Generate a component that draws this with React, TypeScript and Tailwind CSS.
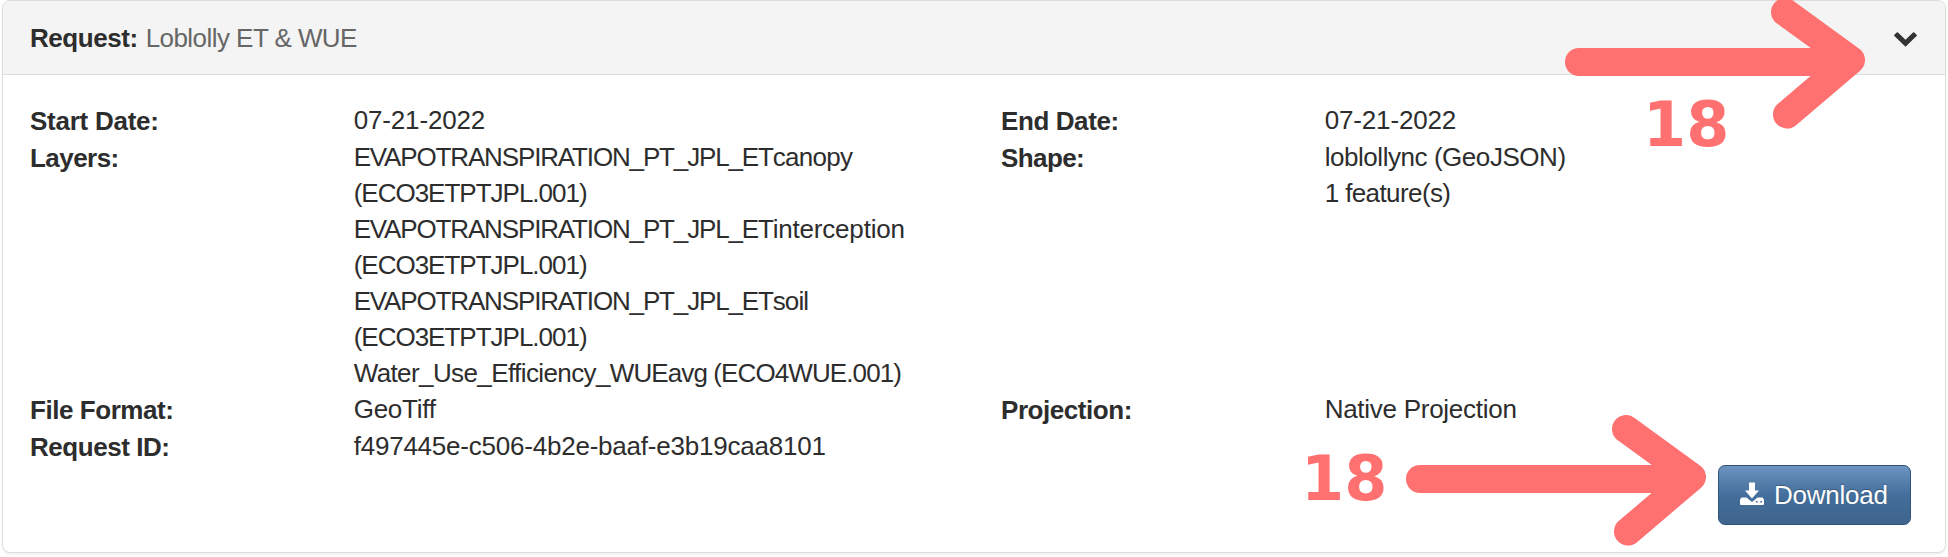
type Segment = { text: string; spacing: string };
type Field = { label: string; labelSpacing: string; lines: Segment[][] };

const evapotranspiration = (layer: string, spacing: string): Segment[] => [
  { text: 'EVAPOTRANSPIRATION_PT_JPL_ET', spacing: 'tracking-[-1.15px]' },
  { text: layer, spacing },
];
const productCode: Segment[] = [{ text: '(ECO3ETPTJPL.001)', spacing: 'tracking-[-1px]' }];

const rows: [Field, Field?][] = [
  [
    {
      label: 'Start Date:',
      labelSpacing: 'tracking-[-0.25px]',
      lines: [[{ text: '07-21-2022', spacing: 'tracking-[-0.15px]' }]],
    },
    {
      label: 'End Date:',
      labelSpacing: 'tracking-[-0.4px]',
      lines: [[{ text: '07-21-2022', spacing: 'tracking-[-0.15px]' }]],
    },
  ],
  [
    {
      label: 'Layers:',
      labelSpacing: 'tracking-[-0.55px]',
      lines: [
        evapotranspiration('canopy', 'tracking-[-0.7px]'),
        productCode,
        evapotranspiration('interception', 'tracking-[-0.2px]'),
        productCode,
        evapotranspiration('soil', 'tracking-[-0.9px]'),
        productCode,
        [
          { text: 'Water_Use_Efficiency_', spacing: 'tracking-[-0.6px]' },
          { text: 'WUEavg (ECO4WUE.001)', spacing: 'tracking-[-0.9px]' },
        ],
      ],
    },
    {
      label: 'Shape:',
      labelSpacing: 'tracking-[-0.6px]',
      lines: [
        [{ text: 'loblollync (GeoJSON)', spacing: 'tracking-[-0.45px]' }],
        [{ text: '1 feature(s)', spacing: 'tracking-[-0.6px]' }],
      ],
    },
  ],
  [
    {
      label: 'File Format:',
      labelSpacing: 'tracking-[-0.45px]',
      lines: [[{ text: 'GeoTiff', spacing: 'tracking-[-0.25px]' }]],
    },
    {
      label: 'Projection:',
      labelSpacing: 'tracking-[-0.45px]',
      lines: [[{ text: 'Native Projection', spacing: 'tracking-[-0.27px]' }]],
    },
  ],
  [
    {
      label: 'Request ID:',
      labelSpacing: 'tracking-[-0.45px]',
      lines: [[{ text: 'f497445e-c506-4b2e-baaf-e3b19caa8101', spacing: 'tracking-[-0.22px]' }]],
    },
  ],
];

function FieldCell({ field }: { field: Field }) {
  return (
    <div className="flex w-[971px] shrink-0">
      <div className={`w-1/3 pt-px leading-[36px] font-bold ${field.labelSpacing}`}>{field.label}</div>
      <div className="w-2/3 leading-[36px] whitespace-nowrap">
        {field.lines.map((line, i) => (
          <div key={i}>
            {line.map((segment) => (
              <span key={segment.text} className={segment.spacing}>
                {segment.text}
              </span>
            ))}
          </div>
        ))}
      </div>
    </div>
  );
}

function Arrow({ className }: { className: string }) {
  return (
    <svg
      className={className}
      viewBox="0 0 300 131"
      fill="none"
      stroke="#ff7070"
      strokeWidth="28"
      strokeLinecap="round"
      strokeLinejoin="round"
    >
      <path d="M14 64H280" />
      <path fill="#ff7070" stroke="none" d="M246 50L290 62L246 78Z" />
      <path d="M220 14L286 62L222 116.500" />
    </svg>
  );
}

function StepNumber({ className }: { className: string }) {
  return (
    <span
      className={`absolute font-['DejaVu_Sans',sans-serif] text-[62px] leading-[72px] font-bold text-[#ff7070] ${className}`}
    >
      18
    </span>
  );
}

export default function App() {
  return (
    <div className="relative h-[557px] w-[1948px] overflow-hidden bg-white pl-[2px] font-['Liberation_Sans',Arial,sans-serif] text-[26px] text-[#2d2d2d]">
      <section className="flex h-[553px] w-[1944px] flex-col rounded-[8px] border border-[#dddddd] bg-white shadow-[0_2px_2px_rgba(0,0,0,0.05)]">
        <header className="flex h-[74px] shrink-0 items-center justify-between rounded-t-[7px] border-b border-[#dddddd] bg-[#f4f4f4] pr-[28px] pl-[27px]">
          <h2 className="flex gap-[8px] leading-[36px]">
            <strong className="tracking-[-0.45px]">Request:</strong>
            <span className="tracking-[-0.55px] text-[#666666]">Loblolly ET &amp; WUE</span>
          </h2>
          <svg className="mt-[4px] h-[15px] w-[23px]" viewBox="0 0 23 15" fill="#333333">
            <path d="M0.400 4.100Q-0.200 3.400 0.400 2.800L2.700 0.500Q3.400 0 4 0.500L11.500 7.700L19 0.500Q19.600 0 20.300 0.500L22.600 2.800Q23.200 3.400 22.600 4.100L11.500 14.700Z" />
          </svg>
        </header>
        <div className="flex flex-1 flex-col pt-[27px] pl-[27px]">
          {rows.map(([left, right], i) => (
            <div key={i} className="flex">
              <FieldCell field={left} />
              {right && <FieldCell field={right} />}
            </div>
          ))}
          <div className="flex justify-end pr-[34px]">
            <button className="flex h-[60px] w-[193px] items-center gap-[10px] rounded-[7px] border border-[#2f5479] bg-linear-to-b from-[#6d94c1] via-[#446e9b] via-50% to-[#3e648d] pl-[21px] tracking-[-0.25px] text-white text-shadow-[0_-1px_1px_rgba(0,0,0,0.25)]">
              <svg className="mb-[3px] h-[24px] w-[24px]" viewBox="0 0 24 24" fill="currentColor">
                <path d="M9 0.500H15V8.500H19L12 16.500L5 8.500H9Z" />
                <path
                  fillRule="evenodd"
                  d="M1.500 15.500H6.500L12 20L17.500 15.500H22.500L24 17.500V22Q24 23 23 23H1Q0 23 0 22V17.500ZM16 19V20.500H17.700V19ZM20.300 19V20.500H22V19Z"
                />
              </svg>
              Download
            </button>
          </div>
        </div>
      </section>
      <Arrow className="absolute top-[-2px] left-[1565px] h-[131px] w-[300px]" />
      <Arrow className="absolute top-[415px] left-[1406px] h-[131px] w-[300px]" />
      <StepNumber className="top-[89px] left-[1643px]" />
      <StepNumber className="top-[443px] left-[1301px]" />
    </div>
  );
}
